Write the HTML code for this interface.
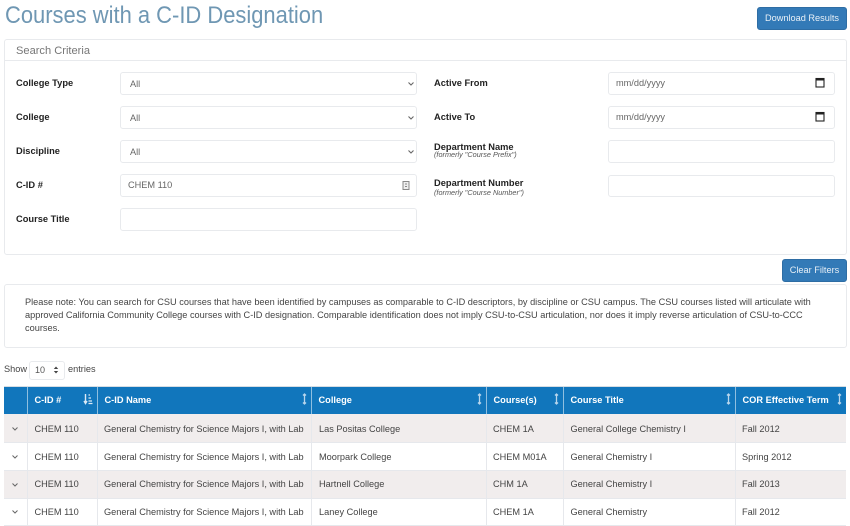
<!DOCTYPE html>
<html><head><meta charset="utf-8"><style>
html,body{margin:0;padding:0;background:#fff;}
body{width:850px;height:526px;overflow:hidden;position:relative;font-family:"Liberation Sans",Arial,sans-serif;font-size:9.2px;color:#444;}
.a{position:absolute;white-space:nowrap;}
.box{position:absolute;box-sizing:border-box;border:1px solid #e8eaed;border-radius:3px;background:#fff;}
.lb{position:absolute;white-space:nowrap;font-weight:bold;color:#222;font-size:9.3px;line-height:12px;left:16px;}
.sub{position:absolute;white-space:nowrap;font-style:italic;font-size:7.3px;color:#555;line-height:8px;left:434px;}
.v{position:absolute;white-space:nowrap;color:#666;font-size:9.2px;line-height:12px;}
.btn{position:absolute;box-sizing:border-box;background:#337ab7;border:1px solid #2e6da4;border-radius:3px;color:#e8f0f7;font-size:9.2px;text-align:center;}
.th{position:absolute;top:387px;height:27px;background:#1176bc;border-right:1px solid #8fbfe0;box-sizing:border-box;color:#fff;font-weight:bold;font-size:9.25px;line-height:27px;padding-left:6.5px;white-space:nowrap;}
.row{position:absolute;left:4px;width:842px;box-sizing:border-box;border-bottom:1px solid #e6e8ec;}
.vl{position:absolute;width:1px;top:414px;height:112px;background:#e6e8ec;}
.c{position:absolute;white-space:nowrap;color:#444;font-size:9.2px;line-height:12px;}
svg{position:absolute;display:block;}
</style></head><body>
<div class="a" style="left:5px;top:1px;font-size:24px;line-height:30px;color:#6f97b3;transform:scaleX(.914);transform-origin:left center;">Courses with a C-ID Designation</div>
<div class="btn" style="left:757px;top:7px;width:90px;height:23px;line-height:21px;">Download Results</div>

<div class="box" style="left:4px;top:39px;width:843px;height:216px;"></div>
<div class="a" style="left:5px;top:60px;width:841px;height:1px;background:#e8eaed;"></div>
<div class="a" style="left:16px;top:44px;font-size:11.1px;line-height:14px;color:#777;">Search Criteria</div>

<div class="lb" style="top:77px;">College Type</div>
<div class="lb" style="top:111px;">College</div>
<div class="lb" style="top:145px;">Discipline</div>
<div class="lb" style="top:179px;">C-ID #</div>
<div class="lb" style="top:213px;">Course Title</div>

<div class="box" style="left:120px;top:72px;width:297px;height:23px;"></div>
<div class="box" style="left:120px;top:106px;width:297px;height:23px;"></div>
<div class="box" style="left:120px;top:140px;width:297px;height:23px;"></div>
<div class="box" style="left:120px;top:174px;width:297px;height:23px;"></div>
<div class="box" style="left:120px;top:208px;width:297px;height:23px;"></div>
<div class="v" style="left:130px;top:78px;">All</div>
<div class="v" style="left:130px;top:112px;">All</div>
<div class="v" style="left:130px;top:146px;">All</div>
<div class="v" style="left:128px;top:179px;">CHEM 110</div>
<svg style="left:407px;top:81px" width="8" height="6"><path d="M1.5 1.5L4 4L6.5 1.5" fill="none" stroke="#666" stroke-width="1.1"/></svg>
<svg style="left:407px;top:115px" width="8" height="6"><path d="M1.5 1.5L4 4L6.5 1.5" fill="none" stroke="#666" stroke-width="1.1"/></svg>
<svg style="left:407px;top:149px" width="8" height="6"><path d="M1.5 1.5L4 4L6.5 1.5" fill="none" stroke="#666" stroke-width="1.1"/></svg>
<svg style="left:402px;top:181px" width="8" height="9"><rect x="1" y="0.5" width="6" height="8" fill="#eee" stroke="#888" stroke-width="1"/><path d="M3 3h2M3 5.5h2" stroke="#888" stroke-width="1"/></svg>

<div class="lb" style="left:434px;top:77px;">Active From</div>
<div class="lb" style="left:434px;top:111px;">Active To</div>
<div class="lb" style="left:434px;top:141px;">Department Name</div>
<div class="sub" style="top:151px;">(formerly "Course Prefix")</div>
<div class="lb" style="left:434px;top:177px;">Department Number</div>
<div class="sub" style="top:189px;">(formerly "Course Number")</div>

<div class="box" style="left:608px;top:72px;width:227px;height:23px;"></div>
<div class="box" style="left:608px;top:106px;width:227px;height:23px;"></div>
<div class="box" style="left:608px;top:140px;width:227px;height:23px;"></div>
<div class="box" style="left:608px;top:175px;width:227px;height:22px;"></div>
<div class="v" style="left:616px;top:77px;">mm/dd/yyyy</div>
<div class="v" style="left:616px;top:111px;">mm/dd/yyyy</div>
<svg style="left:815px;top:77px" width="10" height="11"><rect x="1" y="1.5" width="8" height="8.5" fill="none" stroke="#222" stroke-width="1.1"/><rect x="1" y="1" width="8" height="2.5" fill="#222"/></svg>
<svg style="left:815px;top:111px" width="10" height="11"><rect x="1" y="1.5" width="8" height="8.5" fill="none" stroke="#222" stroke-width="1.1"/><rect x="1" y="1" width="8" height="2.5" fill="#222"/></svg>

<div class="btn" style="left:782px;top:259px;width:65px;height:23px;line-height:21px;">Clear Filters</div>

<div class="box" style="left:4px;top:284px;width:843px;height:64px;"></div>
<div class="a" style="left:25px;top:296px;line-height:13px;font-size:9.2px;color:#444;">Please note: You can search for CSU courses that have been identified by campuses as comparable to C-ID descriptors, by discipline or CSU campus. The CSU courses listed will articulate with<br>approved California Community College courses with C-ID designation. Comparable identification does not imply CSU-to-CSU articulation, nor does it imply reverse articulation of CSU-to-CCC<br>courses.</div>

<div class="a" style="left:4px;top:363px;line-height:12px;color:#444;">Show</div>
<div class="box" style="left:29px;top:361px;width:36px;height:19px;"></div>
<div class="a" style="left:35px;top:365px;font-size:9px;line-height:11px;color:#555;">10</div>
<svg style="left:53px;top:366px" width="6" height="8"><path d="M3 0.5L5.2 3H0.8ZM3 7.5L0.8 5H5.2Z" fill="#444"/></svg>
<div class="a" style="left:68px;top:363px;line-height:12px;color:#444;">entries</div>

<div class="a" style="left:4px;top:386px;width:842px;height:1px;background:#d6dde3;"></div>
<div class="th" style="left:4px;width:24px;"></div>
<div class="th" style="left:28px;width:70px;">C-ID #</div>
<div class="th" style="left:98px;width:214px;">C-ID Name</div>
<div class="th" style="left:312px;width:175px;">College</div>
<div class="th" style="left:487px;width:77px;">Course(s)</div>
<div class="th" style="left:564px;width:172px;">Course Title</div>
<div class="th" style="left:736px;width:110px;border-right:0;">COR Effective Term</div>

<svg style="left:83px;top:393px" width="10" height="12"><path d="M2.5 1V10M1 8L2.5 10.5L4 8" fill="none" stroke="#dbe9f5" stroke-width="1.4"/><path d="M5.5 2h1.5M5.5 5h2.5M5.5 8h3.5M5.5 10.5h4" stroke="#dbe9f5" stroke-width="1.2"/></svg>
<svg style="left:301px;top:393px" width="7" height="12"><path d="M3.5 1V11M2 2.5L3.5 1L5 2.5M2 9.5L3.5 11L5 9.5" fill="none" stroke="#b9d6ec" stroke-width="1.3"/></svg>
<svg style="left:476px;top:393px" width="7" height="12"><path d="M3.5 1V11M2 2.5L3.5 1L5 2.5M2 9.5L3.5 11L5 9.5" fill="none" stroke="#b9d6ec" stroke-width="1.3"/></svg>
<svg style="left:553px;top:393px" width="7" height="12"><path d="M3.5 1V11M2 2.5L3.5 1L5 2.5M2 9.5L3.5 11L5 9.5" fill="none" stroke="#b9d6ec" stroke-width="1.3"/></svg>
<svg style="left:725px;top:393px" width="7" height="12"><path d="M3.5 1V11M2 2.5L3.5 1L5 2.5M2 9.5L3.5 11L5 9.5" fill="none" stroke="#b9d6ec" stroke-width="1.3"/></svg>
<svg style="left:836px;top:393px" width="7" height="12"><path d="M3.5 1V11M2 2.5L3.5 1L5 2.5M2 9.5L3.5 11L5 9.5" fill="none" stroke="#b9d6ec" stroke-width="1.3"/></svg>

<div class="row" style="top:414px;height:29px;background:#f1eded;"></div>
<div class="row" style="top:443px;height:28px;background:#fff;"></div>
<div class="row" style="top:471px;height:28px;background:#f1eded;"></div>
<div class="row" style="top:499px;height:27px;background:#fff;"></div>
<div class="vl" style="left:27px;"></div>
<div class="vl" style="left:97px;"></div>
<div class="vl" style="left:311px;"></div>
<div class="vl" style="left:486px;"></div>
<div class="vl" style="left:563px;"></div>
<div class="vl" style="left:735px;"></div>

<svg style="left:11px;top:426px" width="8" height="6"><path d="M1.5 1.5L4 4L6.5 1.5" fill="none" stroke="#666" stroke-width="1"/></svg>
<svg style="left:11px;top:454px" width="8" height="6"><path d="M1.5 1.5L4 4L6.5 1.5" fill="none" stroke="#666" stroke-width="1"/></svg>
<svg style="left:11px;top:482px" width="8" height="6"><path d="M1.5 1.5L4 4L6.5 1.5" fill="none" stroke="#666" stroke-width="1"/></svg>
<svg style="left:11px;top:509px" width="8" height="6"><path d="M1.5 1.5L4 4L6.5 1.5" fill="none" stroke="#666" stroke-width="1"/></svg>

<div class="c" style="left:34.5px;top:423px;">CHEM 110</div>
<div class="c" style="left:104px;top:423px;">General Chemistry for Science Majors I, with Lab</div>
<div class="c" style="left:319px;top:423px;">Las Positas College</div>
<div class="c" style="left:493px;top:423px;">CHEM 1A</div>
<div class="c" style="left:570.5px;top:423px;">General College Chemistry I</div>
<div class="c" style="left:742px;top:423px;">Fall 2012</div>

<div class="c" style="left:34.5px;top:451px;">CHEM 110</div>
<div class="c" style="left:104px;top:451px;">General Chemistry for Science Majors I, with Lab</div>
<div class="c" style="left:319px;top:451px;">Moorpark College</div>
<div class="c" style="left:493px;top:451px;">CHEM M01A</div>
<div class="c" style="left:570.5px;top:451px;">General Chemistry I</div>
<div class="c" style="left:742px;top:451px;">Spring 2012</div>

<div class="c" style="left:34.5px;top:478px;">CHEM 110</div>
<div class="c" style="left:104px;top:478px;">General Chemistry for Science Majors I, with Lab</div>
<div class="c" style="left:319px;top:478px;">Hartnell College</div>
<div class="c" style="left:493px;top:478px;">CHM 1A</div>
<div class="c" style="left:570.5px;top:478px;">General Chemistry I</div>
<div class="c" style="left:742px;top:478px;">Fall 2013</div>

<div class="c" style="left:34.5px;top:506px;">CHEM 110</div>
<div class="c" style="left:104px;top:506px;">General Chemistry for Science Majors I, with Lab</div>
<div class="c" style="left:319px;top:506px;">Laney College</div>
<div class="c" style="left:493px;top:506px;">CHEM 1A</div>
<div class="c" style="left:570.5px;top:506px;">General Chemistry</div>
<div class="c" style="left:742px;top:506px;">Fall 2012</div>
</body></html>
